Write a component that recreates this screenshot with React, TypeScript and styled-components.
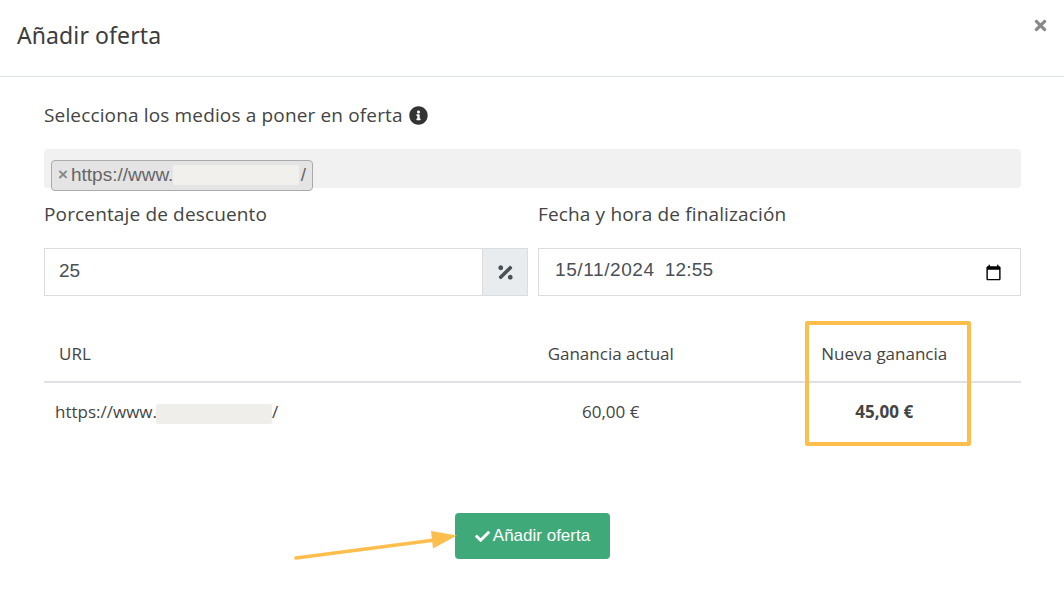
import React from "react";
import styled, { createGlobalStyle } from "styled-components";
import { FaCheck, FaInfoCircle, FaPercentage, FaTimes } from "react-icons/fa";

const Global = createGlobalStyle`
  html, body { margin: 0; padding: 0; background: #fff; }
  body { width: 1064px; height: 606px; overflow: hidden; font-family: "Open Sans", "Noto Sans", sans-serif; color: #444; }
`;

const Page = styled.div`
  position: relative;
  width: 1064px;
  height: 606px;
  display: flex;
  flex-direction: column;
`;

const Header = styled.header`
  height: 77px;
  box-sizing: border-box;
  border-bottom: 1px solid #dee2e6;
  padding: 20px 14px 0 17px;
  display: flex;
  justify-content: space-between;
  align-items: flex-start;
`;

const Title = styled.h1`
  margin: 0;
  font: 400 23px/30px "Noto Sans", "Liberation Sans", sans-serif;
  letter-spacing: 0.1px;
  color: #3c3c3c;
`;

const Close = styled.button`
  border: 0;
  background: none;
  padding: 0;
  margin-top: -4px;
  width: 20px;
  height: 18px;
  display: flex;
  align-items: center;
  justify-content: center;
  color: #888;
  font-size: 17px;
`;

const Body = styled.main`
  padding: 25px 43px 0 44px;
  display: flex;
  flex-direction: column;
`;

const Label = styled.label`
  display: flex;
  align-items: center;
  gap: 6px;
  height: 26px;
  font-size: 19px;
  line-height: 26px;
  letter-spacing: 0.15px;
  color: #444;
`;

const Info = styled(FaInfoCircle)`
  color: #333;
  font-size: 19px;
`;

const Select = styled.div`
  margin-top: 21px;
  height: 39px;
  background: #f1f1f1;
  border-radius: 4px;
  padding: 11px 0 0 7px;
  box-sizing: border-box;
`;

const Chip = styled.span`
  display: inline-flex;
  align-items: center;
  box-sizing: border-box;
  width: 262px;
  height: 31px;
  padding: 0 6px 2px;
  background: #e4e4e4;
  border: 1px solid #aaa;
  border-radius: 4px;
  font: 400 19px/1 "Liberation Sans", Arial, sans-serif;
  color: #666;
`;

const ChipClose = styled.span`
  color: #888;
  font-weight: 700;
  font-size: 17px;
  margin-right: 3px;
`;

const Blur = styled.span<{ $w: number; $h: number }>`
  display: inline-block;
  width: ${(p) => p.$w}px;
  height: ${(p) => p.$h}px;
  background: #f0eeeb;
  border-radius: 2px;
`;

const ChipBlur = styled(Blur)`
  background: #f2f0ed;
  margin-right: 2px;
`;

const RowBlur = styled(Blur)`
  margin: 6px 0 0 -1px;
`;

const Fields = styled.div`
  display: grid;
  grid-template-columns: 484px 483px;
  column-gap: 10px;
  margin-top: 13px;
`;

const Field = styled.div`
  display: flex;
  flex-direction: column;
  gap: 21px;
`;

const InputGroup = styled.div`
  display: flex;
  height: 48px;
`;

const Input = styled.input`
  flex: 1;
  min-width: 0;
  box-sizing: border-box;
  border: 1px solid #ddd;
  border-right: 0;
  padding: 0 14px 2px;
  font: 400 19px "Liberation Sans", Arial, sans-serif;
  color: #495057;
  outline: none;
`;

const Addon = styled.span`
  width: 46px;
  box-sizing: border-box;
  display: flex;
  align-items: center;
  justify-content: center;
  background: #e9ecef;
  border: 1px solid #ddd;
  color: #495057;
  font-size: 19px;
`;

const DateBox = styled.div`
  height: 48px;
  box-sizing: border-box;
  border: 1px solid #ddd;
  padding: 0 18px 0 16px;
  display: flex;
  align-items: center;
  justify-content: space-between;
  font: 400 19px "Liberation Sans", Arial, sans-serif;
  color: #495057;
  letter-spacing: 0.6px;
`;

const DateText = styled.span`
  margin-top: -5px;
`;

const TimeText = styled.span`
  margin-left: 10px;
  letter-spacing: 0.2px;
`;

const Table = styled.div`
  margin-top: 25px;
`;

const Row = styled.div`
  display: grid;
  grid-template-columns: 430px 273.5px 273.5px;
  align-items: center;
`;

const HeadRow = styled(Row)`
  height: 62px;
  box-sizing: border-box;
  padding-top: 4px;
  border-bottom: 2px solid #dee2e6;
  font-size: 17px;
  color: #444;
`;

const DataRow = styled(Row)`
  height: 60px;
  box-sizing: border-box;
  padding-bottom: 4px;
  font-size: 17px;
  color: #444;
`;

const UrlHead = styled.div`
  padding-left: 15px;
`;

const UrlCell = styled.div`
  padding-left: 11px;
  display: flex;
  align-items: center;
`;

const Centered = styled.div<{ $bold?: boolean }>`
  text-align: center;
  font-weight: ${(p) => (p.$bold ? 700 : 400)};
`;

const Actions = styled.div`
  margin-top: 70px;
  margin-left: 411px;
`;

const Submit = styled.button`
  width: 155px;
  height: 46px;
  border: 0;
  border-radius: 4px;
  background: #3fa979;
  color: #fff;
  font: 400 17px "Liberation Sans", Arial, sans-serif;
  display: flex;
  align-items: center;
  justify-content: center;
  gap: 3px;
`;

const Highlight = styled.div`
  position: absolute;
  left: 805px;
  top: 321px;
  width: 166px;
  height: 125px;
  box-sizing: border-box;
  border: 4px solid #fdbe4d;
  border-radius: 2px;
`;

const Arrow = styled.svg`
  position: absolute;
  left: 285px;
  top: 520px;
`;

export default function App() {
  return (
    <Page>
      <Global />
      <Header>
        <Title>Añadir oferta</Title>
        <Close aria-label="Cerrar"><FaTimes /></Close>
      </Header>
      <Body>
        <Label>Selecciona los medios a poner en oferta <Info /></Label>
        <Select>
          <Chip>
            <ChipClose>×</ChipClose>https://www.<ChipBlur $w={126} $h={20} />/
          </Chip>
        </Select>
        <Fields>
          <Field>
            <Label>Porcentaje de descuento</Label>
            <InputGroup>
              <Input defaultValue="25" />
              <Addon><FaPercentage /></Addon>
            </InputGroup>
          </Field>
          <Field>
            <Label>Fecha y hora de finalización</Label>
            <DateBox>
              <DateText>15/11/2024<TimeText>12:55</TimeText></DateText>
              <svg width="17" height="17" viewBox="0 0 24 24" fill="#000">
                <path d="M20 3h-1V1h-2v2H7V1H5v2H4c-1.1 0-2 .9-2 2v16c0 1.1.9 2 2 2h16c1.1 0 2-.9 2-2V5c0-1.1-.9-2-2-2zm0 18H4V8h16v13z" />
              </svg>
            </DateBox>
          </Field>
        </Fields>
        <Table>
          <HeadRow>
            <UrlHead>URL</UrlHead>
            <Centered>Ganancia actual</Centered>
            <Centered>Nueva ganancia</Centered>
          </HeadRow>
          <DataRow>
            <UrlCell>https://www.<RowBlur $w={116} $h={20} />/</UrlCell>
            <Centered>60,00 €</Centered>
            <Centered $bold>45,00 €</Centered>
          </DataRow>
        </Table>
        <Actions>
          <Submit><FaCheck size={15} />Añadir oferta</Submit>
        </Actions>
      </Body>
      <Highlight />
      <Arrow width="180" height="45" viewBox="0 0 180 45">
        <line x1="11" y1="38" x2="150" y2="20" stroke="#fdbe4d" strokeWidth="3.6" strokeLinecap="round" />
        <polygon points="172,15.5 146,11 148,28.5" fill="#fdbe4d" />
      </Arrow>
    </Page>
  );
}
